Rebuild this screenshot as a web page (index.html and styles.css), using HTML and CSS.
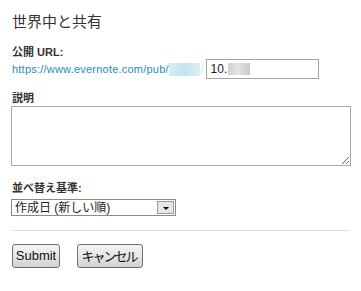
FILE: index.html
```html
<!DOCTYPE html>
<html lang="ja">
<head>
<meta charset="utf-8">
<link rel="stylesheet" href="styles.css">
</head>
<body>
<div class="page">
  <h1 class="title">世界中と共有</h1>
  <div class="label label-url">公開 URL:</div>
  <div class="url-row">
    <a class="link" href="#">https://www.evernote.com/pub/</a>
    <span class="blur-cyan"></span>
    <span class="slash">/</span>
    <div class="text-input">10.<span class="blur-grey"></span></div>
  </div>
  <div class="label label-desc">説明</div>
  <textarea class="desc"></textarea>
  <div class="label label-sort">並べ替え基準:</div>
  <div class="select">
    <span class="select-text">作成日 (新しい順)</span>
    <span class="select-btn"><span class="tri"></span></span>
  </div>
  <div class="rule"></div>
  <div class="buttons">
    <button class="btn btn-submit">Submit</button>
    <button class="btn btn-cancel">キャンセル</button>
  </div>
</div>
</body>
</html>
```

FILE: styles.css
```css
html, body {
  margin: 0;
  padding: 0;
  background: #ffffff;
}
.page {
  padding: 13px 10px 0 12px;
  display: flex;
  flex-direction: column;
  align-items: flex-start;
  font-family: "Liberation Sans", "Noto Sans CJK JP", sans-serif;
  color: #333333;
}
.title {
  margin: 0;
  font-family: "Noto Sans CJK JP", sans-serif;
  font-weight: 400;
  font-size: 15px;
  line-height: 15px;
  color: #333333;
}
.label {
  font-size: 11px;
  line-height: 11px;
  font-weight: bold;
  color: #333333;
  font-family: "Liberation Sans", "Noto Sans CJK JP", sans-serif;
}
.label-url { margin-top: 19px; }
.label-desc { margin-top: 14px; }
.label-sort { margin-top: 17px; }
.url-row {
  margin-top: 1px;
  display: flex;
  align-items: center;
  height: 20px;
}
.link {
  font-size: 11px;
  color: #2a8cbb;
  text-decoration: none;
  letter-spacing: 0.22px;
}
.blur-cyan {
  display: inline-block;
  width: 31px;
  height: 13px;
  background: linear-gradient(90deg, #d6eef4, #c3e4ee 50%, #d9eff5);
}
.slash {
  font-size: 10px;
  color: #c9dde3;
  margin-left: 1px;
}
.text-input {
  margin-left: 2px;
  box-sizing: border-box;
  width: 113px;
  height: 20px;
  border: 1px solid #a5a5a5;
  display: flex;
  align-items: center;
  padding-left: 4px;
  font-size: 12px;
  color: #222222;
}
.blur-grey {
  display: inline-block;
  width: 22px;
  height: 12px;
  margin-left: 1px;
  background: linear-gradient(90deg, #d0d0d0, #e4e4e4 45%, #c8c8c8);
}
.desc {
  margin: 2px 0 0 -1px;
  box-sizing: border-box;
  width: 340px;
  height: 60px;
  border: 1px solid #a8a8a8;
  padding: 2px;
  font-family: "Liberation Sans", sans-serif;
  font-size: 12px;
  resize: both;
  outline: none;
}
.select {
  margin: 5px 0 0 -1px;
  box-sizing: border-box;
  width: 165px;
  height: 17px;
  border: 1px solid #8a8a8a;
  display: flex;
  align-items: center;
  justify-content: space-between;
  padding: 0 1px 0 3px;
  font-size: 12px;
  color: #222222;
  font-family: "Liberation Sans", "Noto Sans CJK JP", sans-serif;
}
.select-text {
  line-height: 14px;
}
.select-btn {
  box-sizing: border-box;
  width: 17px;
  height: 13px;
  background: #e6e6e6;
  border: 1px solid #9a9a9a;
  display: flex;
  align-items: center;
  justify-content: center;
}
.tri {
  width: 0;
  height: 0;
  border-left: 3px solid transparent;
  border-right: 3px solid transparent;
  border-top: 3px solid #000000;
  margin-top: 1px;
}
.rule {
  margin-top: 14px;
  width: 338px;
  height: 1px;
  background: #e2e2e2;
}
.buttons {
  margin-top: 13px;
  display: flex;
  gap: 17px;
}
.btn {
  box-sizing: border-box;
  height: 24px;
  padding: 0;
  border: 1px solid #707070;
  border-radius: 3px;
  background: linear-gradient(180deg, #f3f3f3 0%, #e6e6e6 50%, #d2d2d2 100%);
  color: #111111;
  font-size: 13px;
  line-height: 20px;
  white-space: nowrap;
}
.btn-submit {
  width: 48px;
  font-family: "Liberation Sans", sans-serif;
}
.btn-cancel {
  width: 66px;
  font-family: "Noto Sans CJK JP", sans-serif;
  font-size: 13px;
  letter-spacing: -2px;
  text-indent: -2px;
}
```
